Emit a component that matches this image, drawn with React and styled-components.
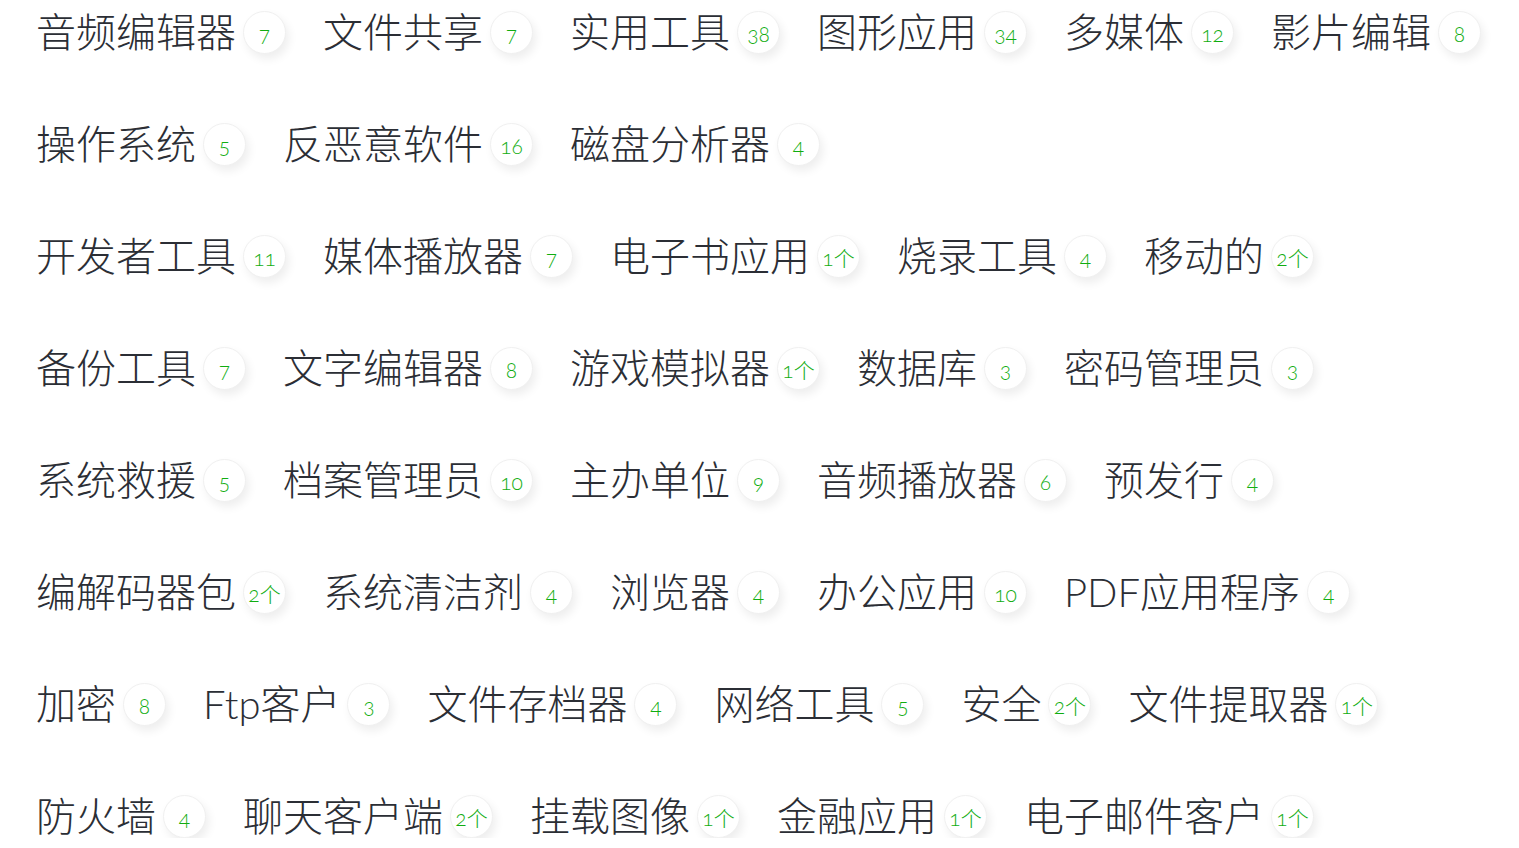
import React from "react";
import styled, { createGlobalStyle } from "styled-components";

const rows = [
  [["音频编辑器", "7"], ["文件共享", "7"], ["实用工具", "38"], ["图形应用", "34"], ["多媒体", "12"], ["影片编辑", "8"]],
  [["操作系统", "5"], ["反恶意软件", "16"], ["磁盘分析器", "4"]],
  [["开发者工具", "11"], ["媒体播放器", "7"], ["电子书应用", "1个"], ["烧录工具", "4"], ["移动的", "2个"]],
  [["备份工具", "7"], ["文字编辑器", "8"], ["游戏模拟器", "1个"], ["数据库", "3"], ["密码管理员", "3"]],
  [["系统救援", "5"], ["档案管理员", "10"], ["主办单位", "9"], ["音频播放器", "6"], ["预发行", "4"]],
  [["编解码器包", "2个"], ["系统清洁剂", "4"], ["浏览器", "4"], ["办公应用", "10"], ["PDF应用程序", "4"]],
  [["加密", "8"], ["Ftp客户", "3"], ["文件存档器", "4"], ["网络工具", "5"], ["安全", "2个"], ["文件提取器", "1个"]],
  [["防火墙", "4"], ["聊天客户端", "2个"], ["挂载图像", "1个"], ["金融应用", "1个"], ["电子邮件客户", "1个"]],
];

const App = () => (
  <>
    <GlobalStyle />
    <Page>
      {rows.map((row, i) => (
        <Row key={i}>
          {row.map(([name, count]) => (
            <Tag key={name} href="#">
              <Name>{name}</Name>
              <Count>{count}</Count>
            </Tag>
          ))}
        </Row>
      ))}
    </Page>
  </>
);

export default App;

const GlobalStyle = createGlobalStyle`
  html, body {
    margin: 0;
    padding: 0;
    background: #fff;
  }
  body {
    font-family: Lato, "Noto Sans CJK SC", sans-serif;
    overflow: hidden;
  }
`;

const Page = styled.div`
  padding: 10px 0 0 36px;
  display: flex;
  flex-direction: column;
  gap: 68px;
`;

const Row = styled.div`
  display: flex;
  gap: 37px;
`;

const Tag = styled.a`
  display: flex;
  align-items: center;
  gap: 7px;
  height: 44px;
  text-decoration: none;
`;

const Name = styled.span`
  font-family: Lato, "Noto Sans CJK SC", sans-serif;
  font-size: 40px;
  font-weight: 300;
  color: #2b2e35;
  line-height: 44px;
  white-space: nowrap;
`;

const Count = styled.span`
  width: 43px;
  height: 43px;
  box-sizing: border-box;
  border-radius: 50%;
  border: 1px solid #f0f0f0;
  background: #fff;
  box-shadow: 3px 5px 10px rgba(0, 0, 0, 0.07);
  display: flex;
  align-items: center;
  justify-content: center;
  padding-top: 2px;
  font-family: Lato, "Noto Sans CJK SC", sans-serif;
  font-size: 21px;
  font-weight: 300;
  font-variant-numeric: oldstyle-nums;
  color: #10ad10;
  white-space: nowrap;
`;
